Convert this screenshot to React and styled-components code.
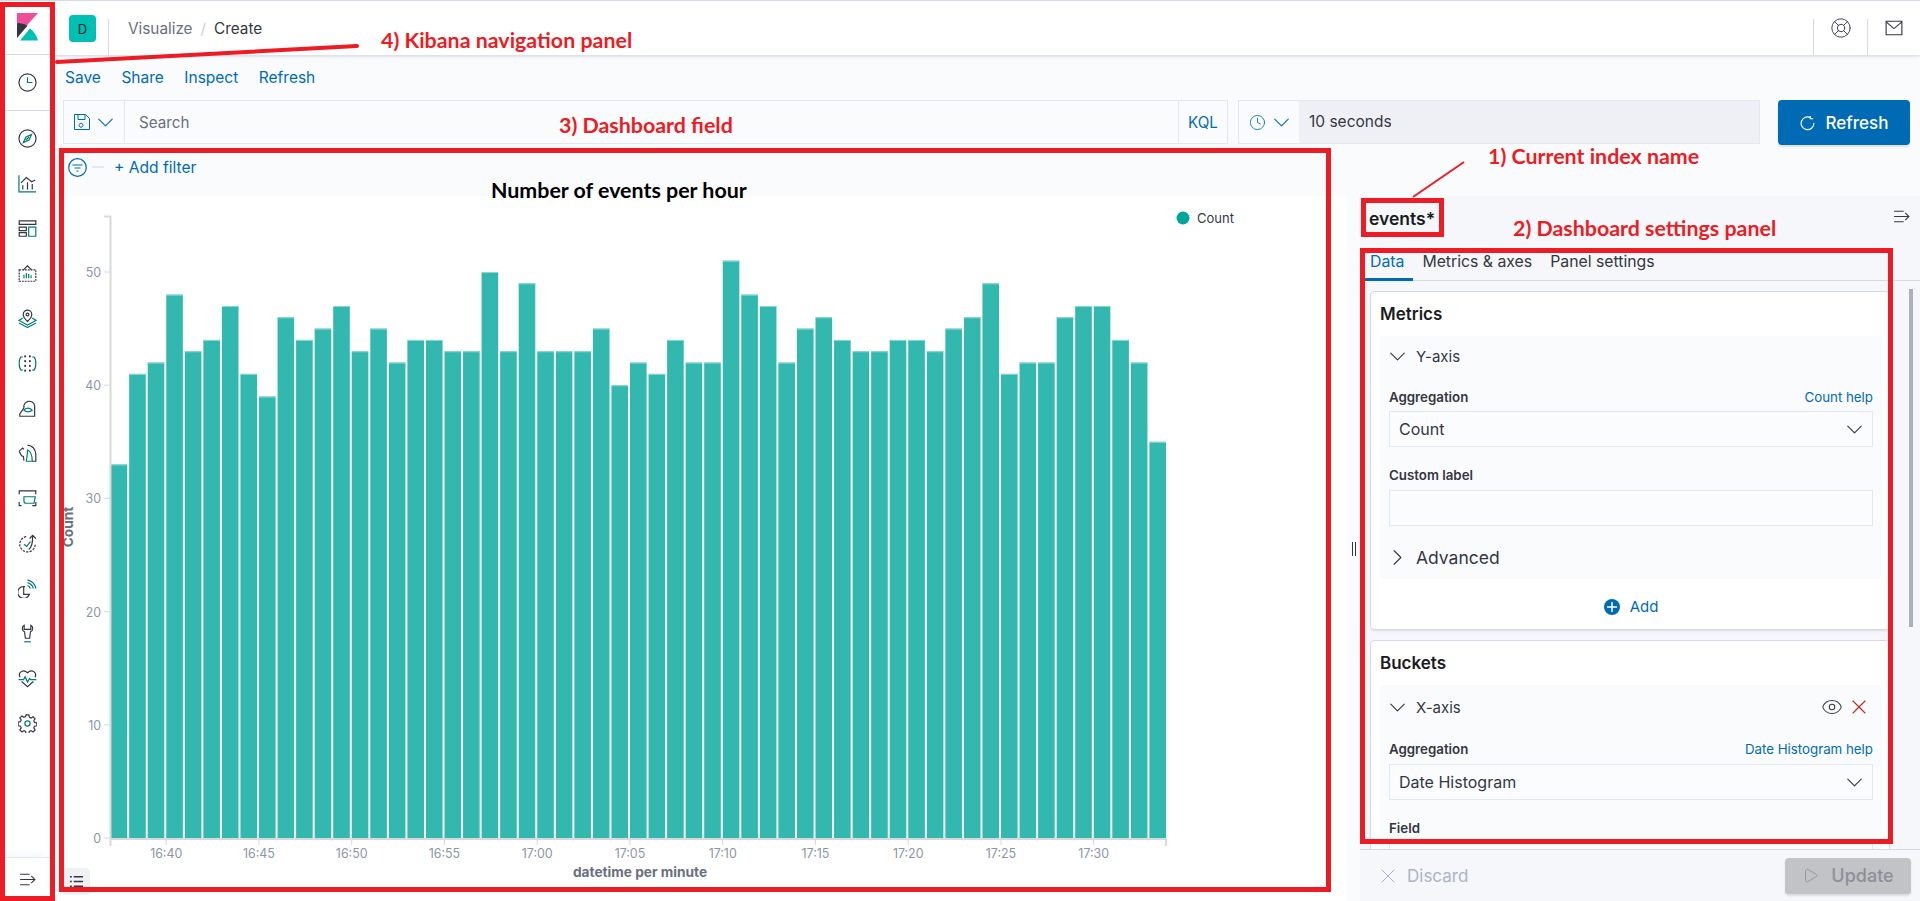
import React from 'react';
import styled, { createGlobalStyle } from 'styled-components';
import { ChevronDown, ChevronRight, Eye, X, Play, Clock, LifeBuoy } from 'lucide-react';

const GlobalStyle = createGlobalStyle`
    html, body { margin: 0; padding: 0; background: #fff; }
    body { font-family: "Inter", "Liberation Sans", sans-serif; color: #343741; overflow: hidden; }
    * { box-sizing: border-box; }
`;

const Page = styled.div`
    position: relative;
    display: flex;
    width: 1920px;
    height: 901px;
    overflow: hidden;
    border-top: 1px solid #d3dae6;
`;

/* left nav */
const Nav = styled.nav`
    width: 50px;
    flex-shrink: 0;
    display: flex;
    flex-direction: column;
    background: #fff;
`;
const NavTop = styled.div`
    height: ${p => p.$h}px;
    display: flex;
    align-items: center;
    justify-content: center;
    border-bottom: 1px solid #d3dae6;
    flex-shrink: 0;
`;
const NavList = styled.div`
    flex: 1;
    padding-top: 5px;
    display: flex;
    flex-direction: column;
`;
const NavItem = styled.div`
    height: 45px;
    display: flex;
    align-items: center;
    justify-content: center;
    padding-left: 4px;
`;
const NavBottom = styled.div`
    height: 44px;
    display: flex;
    align-items: center;
    justify-content: center;
    padding-left: 4px;
    border-top: 1px solid #e6e9f0;
    box-shadow: 0 -6px 8px -4px rgba(152,162,179,.12);
`;
const Icon = styled.svg`
    width: ${p => p.$s || 19}px;
    height: ${p => p.$s || 19}px;
    fill: none;
    stroke-width: 1;
    flex-shrink: 0;
`;
const D = styled.path`stroke: #343741;`;
const T = styled.path`stroke: #017d73;`;
const Dots = styled.path`
    stroke: #343741;
    stroke-width: 1.7;
    stroke-linecap: round;
`;

const Main = styled.div`
    flex: 1;
    min-width: 0;
    display: flex;
    flex-direction: column;
    background: #fafbfd;
`;

/* top header */
const Header = styled.header`
    height: 54px;
    flex-shrink: 0;
    display: flex;
    align-items: flex-start;
    background: #fff;
    box-shadow: 0 1px 3px rgba(152,162,179,.45);
    position: relative;
`;
const Avatar = styled.div`
    width: 27px;
    height: 27px;
    margin: 14px 12px 0 19px;
    border-radius: 4px;
    background: #00bfb3;
    display: flex;
    align-items: center;
    justify-content: center;
    font-size: 13px;
    color: #1a1c21;
`;
const Crumbs = styled.div`
    height: 36px;
    margin-top: 18px;
    padding: 0 0 18px 19px;
    border-left: 1px solid #d3dae6;
    display: flex;
    align-items: center;
    flex: 1;
    font-size: 15.3px;
    color: #69707d;
`;
const CrumbSep = styled.span`
    margin: 0 8px;
    color: #c9ced8;
`;
const CrumbNow = styled.span`
    color: #343741;
`;
const HeaderBtn = styled.div`
    width: ${p => p.$w}px;
    height: 36px;
    margin-top: 18px;
    border-left: 1px solid #d3dae6;
    display: flex;
    justify-content: center;
    color: #343741;
`;
const Buoy = styled(LifeBuoy)`
    margin-top: -2px;
`;

/* app menu */
const Menu = styled.div`
    height: 45px;
    flex-shrink: 0;
    display: flex;
    align-items: center;
    gap: 20.5px;
    padding: 0 0 0 15px;
`;
const MenuLink = styled.span`
    font-size: 15.5px;
    color: #006bb4;
`;

/* query bar */
const QueryRow = styled.div`
    height: 45px;
    flex-shrink: 0;
    display: flex;
    padding: 0 10px 0 13px;
`;
const QueryBox = styled.div`
    flex: 1;
    height: 44px;
    display: flex;
    align-items: center;
    border: 1px solid #e3e7ef;
    background: #fafbfd;
`;
const QueryPrepend = styled.div`
    width: ${p => p.$w}px;
    height: 100%;
    display: flex;
    align-items: center;
    justify-content: center;
    gap: 7px;
    color: #006bb4;
    flex-shrink: 0;
    border-right: ${p => (p.$noLine ? 'none' : '1px solid #e3e7ef')};
`;
const SearchText = styled.div`
    flex: 1;
    padding-left: 14px;
    font-size: 15.2px;
    color: #69707d;
`;
const Kql = styled.div`
    width: 49px;
    height: 100%;
    display: flex;
    align-items: center;
    justify-content: center;
    font-size: 15.2px;
    color: #006bb4;
    border-left: 1px solid #e3e7ef;
`;
const TimeBox = styled.div`
    width: 522px;
    height: 44px;
    margin-left: 10px;
    display: flex;
    align-items: center;
    border: 1px solid #e3e7ef;
    background: #fafbfd;
`;
const TimeValue = styled.div`
    flex: 1;
    height: 100%;
    display: flex;
    align-items: center;
    padding-left: 10px;
    padding-bottom: 2px;
    background: #eef0f5;
    font-size: 15.5px;
    color: #343741;
`;
const RefreshBtn = styled.div`
    width: 132px;
    height: 45px;
    margin-left: 18px;
    border-radius: 4px;
    background: #006bb4;
    color: #fff;
    display: flex;
    align-items: center;
    justify-content: center;
    gap: 11px;
    font-size: 17px;
    font-weight: 500;
    box-shadow: 0 2px 2px rgba(152,162,179,.3);
`;

/* work area */
const Work = styled.div`
    flex: 1;
    min-height: 0;
    display: flex;
`;
const ChartColumn = styled.div`
    width: 1297px;
    flex-shrink: 0;
    padding-top: 5px;
    display: flex;
    flex-direction: column;
`;
const FilterBar = styled.div`
    height: 46px;
    flex-shrink: 0;
    display: flex;
    align-items: flex-start;
    padding: 8px 0 0 18px;
`;
const FilterDash = styled.span`
    width: 12px;
    height: 2px;
    margin: 8px 10px 0 5px;
    background: #e3e7ef;
`;
const AddFilter = styled.span`
    font-size: 15.6px;
    line-height: 20px;
    color: #006bb4;
`;
const ChartPanel = styled.div`
    flex: 1;
    position: relative;
    background: #fff;
`;
const ChartSvg = styled.svg`
    display: block;
    width: 1297px;
    height: 705px;
`;
const AxisLabel = styled.text`
    font-family: "Inter", sans-serif;
    font-size: 12.4px;
    fill: #8c95a6;
    text-anchor: ${p => p.$anchor || 'middle'};
`;
const AxisTitle = styled.text`
    font-family: "Inter", sans-serif;
    font-size: 13.7px;
    font-weight: 700;
    fill: #69707d;
    text-anchor: middle;
`;
const LegendLabel = styled.text`
    font-family: "Inter", sans-serif;
    font-size: 13px;
    fill: #343741;
`;
const ListToggle = styled.div`
    position: absolute;
    left: 13px;
    top: 672px;
    width: 27px;
    height: 27px;
    border-radius: 4px;
    background: #f0f1f4;
    color: #343741;
    display: flex;
    align-items: center;
    justify-content: center;
`;

/* options panel */
const Side = styled.aside`
    flex: 1;
    min-width: 0;
    margin-top: 51px;
    display: flex;
    background: #f5f7fa;
`;
const Resizer = styled.div`
    width: 13px;
    flex-shrink: 0;
    display: flex;
    align-items: center;
    justify-content: center;
    gap: 2px;
    background: #fafbfd;
`;
const ResizerBar = styled.span`
    width: 1px;
    height: 14px;
    background: #343741;
`;
const SideBody = styled.div`
    flex: 1;
    min-width: 0;
    display: flex;
    flex-direction: column;
    position: relative;
`;
const SideHead = styled.div`
    height: 52px;
    flex-shrink: 0;
    display: flex;
    justify-content: space-between;
    padding: 12px 10px 0 9px;
`;
const IndexName = styled.div`
    font-size: 17.5px;
    font-weight: 600;
    line-height: 22px;
    color: #1a1c21;
`;
const Tabs = styled.div`
    height: 33px;
    flex-shrink: 0;
    display: flex;
    padding-left: 1px;
    border-bottom: 1px solid #d3dae6;
`;
const Tab = styled.div`
    height: 33px;
    padding: 4px 9px 0;
    font-size: 15.8px;
    line-height: 20px;
    color: ${p => (p.$active ? '#006bb4' : '#343741')};
    border-bottom: ${p => (p.$active ? '3px solid #006bb4' : 'none')};
`;
const Scroll = styled.div`
    flex: 1;
    min-height: 0;
    overflow: hidden;
    padding: 10px 30px 0 10px;
`;
const Scrollbar = styled.div`
    position: absolute;
    right: 7px;
    top: 93px;
    width: 4px;
    height: 338px;
    background: #abb0ba;
`;
const Card = styled.section`
    margin-bottom: 10px;
    padding: 11px 7px 0 9px;
    background: #fff;
    border: 1px solid #d3dae6;
    border-radius: 4px;
    box-shadow: 0 2px 2px -1px rgba(152,162,179,.3);
`;
const CardTitle = styled.h3`
    margin: 0 0 11px;
    height: 22px;
    font-size: 17px;
    font-weight: 600;
    line-height: 22px;
    color: #1a1c21;
`;
const Agg = styled.div`
    padding: 0 9px 2px 9px;
    background: #fafbfd;
    border-radius: 4px;
`;
const AggHead = styled.div`
    height: ${p => p.$h}px;
    margin-top: ${p => p.$top || 0}px;
    display: flex;
    align-items: center;
    color: #343741;
`;
const AggName = styled.span`
    margin-left: 10px;
    font-size: 15px;
    flex: 1;
`;
const Advanced = styled.span`
    margin-left: 10px;
    font-size: 17.5px;
    color: #343741;
`;
const FieldHead = styled.div`
    height: 18px;
    margin-top: ${p => p.$top}px;
    margin-bottom: ${p => p.$gap || 5}px;
    display: flex;
    justify-content: space-between;
    align-items: center;
`;
const FieldLabel = styled.label`
    font-size: 13.3px;
    font-weight: 600;
    color: #343741;
`;
const HelpLink = styled.span`
    font-size: 13.3px;
    color: #006bb4;
`;
const Select = styled.div`
    height: 36px;
    display: flex;
    align-items: center;
    justify-content: space-between;
    padding: 0 10px 0 9px;
    font-size: 16px;
    color: #343741;
    background: #fbfcfd;
    border: 1px solid #e3e7ef;
`;
const AddRow = styled.div`
    height: 50px;
    padding-top: 5px;
    display: flex;
    align-items: center;
    justify-content: center;
    gap: 10px;
    font-size: 15px;
    color: #006bb4;
`;
const AddDot = styled.span`
    width: 16px;
    height: 16px;
    border-radius: 50%;
    background: #006bb4;
    color: #fff;
    display: flex;
    align-items: center;
    justify-content: center;
`;
const Actions = styled.div`
    height: 52px;
    flex-shrink: 0;
    display: flex;
    align-items: center;
    justify-content: space-between;
    padding: 0 9px 0 16px;
    background: #f5f7fa;
    border-top: 1px solid #d3dae6;
`;
const Discard = styled.div`
    display: flex;
    align-items: center;
    gap: 7px;
    font-size: 17px;
    color: #abb4c4;
`;
const UpdateBtn = styled.div`
    width: 126px;
    height: 36px;
    border-radius: 4px;
    background: #c2c3c6;
    color: #8c9099;
    display: flex;
    align-items: center;
    justify-content: center;
    gap: 12px;
    font-size: 18px;
    font-weight: 500;
    box-shadow: 0 2px 2px rgba(152,162,179,.3);
`;

/* red notes drawn over the screenshot */
const Frame = styled.div`
    position: absolute;
    left: ${p => p.$x}px;
    top: ${p => p.$y}px;
    width: ${p => p.$w}px;
    height: ${p => p.$h}px;
    border: ${p => p.$b || 5}px solid #ed1c24;
    pointer-events: none;
`;
const Note = styled.div`
    position: absolute;
    left: ${p => p.$x}px;
    top: ${p => p.$y}px;
    font-family: "Lato", "Liberation Sans", sans-serif;
    font-weight: 700;
    font-size: 21.4px;
    line-height: 24px;
    white-space: nowrap;
    color: ${p => p.$color || '#ed1c24'};
`;
const Scribble = styled.svg`
    position: absolute;
    left: 0;
    top: 0;
    width: 1920px;
    height: 901px;
    pointer-events: none;
`;

/* lucide chevrons drawn big and thin, the negative margin keeps their layout box small */
const Chevron = styled(ChevronDown).attrs({ size: 27, strokeWidth: 1 })`
    flex-shrink: 0;
    margin: 0 -5px;
`;
const SideChevron = styled(ChevronRight).attrs({ size: 27, strokeWidth: 1 })`
    flex-shrink: 0;
    margin: 0 -5px;
`;
const SelectChevron = styled(ChevronDown).attrs({ size: 27, strokeWidth: 1 })`
    flex-shrink: 0;
    margin-right: -6px;
`;
const RemoveIcon = styled(X)`
    margin: 0 2px 0 4px;
`;

const counts = [33, 41, 42, 48, 43, 44, 47, 41, 39, 46, 44, 45, 47, 43, 45, 42, 44, 44, 43, 43, 50, 43, 49, 43, 43, 43, 45, 40, 42, 41, 44, 42, 42, 51, 48, 47, 42, 45, 46, 44, 43, 43, 44, 44, 43, 45, 46, 49, 41, 42, 42, 46, 47, 47, 44, 42, 35];
const xTicks = ['16:40', '16:45', '16:50', '16:55', '17:00', '17:05', '17:10', '17:15', '17:20', '17:25', '17:30'];
const yTicks = [0, 10, 20, 30, 40, 50];
const ZERO_Y = 838;
const UNIT = 11.32;

const navIcons = [
    <><D d="M8 .8a7.2 7.2 0 1 0 0 14.4A7.2 7.2 0 0 0 8 .8Z" /><T d="M8 3.5V8h4.2" /></>,
    <><D d="M8 .8a7.2 7.2 0 1 0 0 14.4A7.2 7.2 0 0 0 8 .8Z" /><T d="M11.5 4.5 9.3 9.3 4.5 11.5 6.7 6.7Z M6.7 9.3 9.3 6.7" /></>,
    <><T d="M.8 1v14h14.4" /><D d="M2.5 7.5 7 3l4.5 3.5 3-1.500M4 9.500V13M8 7v6M12 8.500V13" /></>,
    <><D d="M1 1.500h14v3H1ZM1 6.800h6v3H1ZM1 11.500h6v3H1Z" /><T d="M9 6.800h6v7.700H9Z" /></>,
    <><D strokeDasharray="1.6 .8" d="M1 5h14v9.500H1Z" /><D d="M4.500 5 8 1.500 11.500 5" /><T d="M5 12V9M7 12V7.500M9 12V8.500M11 12V9.500" /></>,
    <><D d="M8 1a3.600 3.600 0 0 0-3.600 3.600C4.400 7 8 10.500 8 10.500s3.600-3.500 3.600-5.900A3.600 3.600 0 0 0 8 1ZM8 3.400a1.200 1.200 0 1 0 0 2.400 1.200 1.200 0 0 0 0-2.400Z" /><T d="M4 7.500.8 9.600 8 13.500l7.200-3.900L12 7.500M.8 11.800 8 15.600l7.200-3.800" /></>,
    <><T d="M4 2.500H2.500C1.500 3.500 1 5 1 8s.5 4.500 1.500 5.500H4M12 2.500h1.500c1 1 1.500 2.500 1.500 5.500s-.5 4.500-1.500 5.500H12" /><Dots d="M6 2h.01M10 2h.01M6 6h.01M10 6h.01M6 10h.01M10 10h.01M6 14h.01M10 14h.01" /></>,
    <><D d="M5 7.500A4.500 4.500 0 0 1 14 5.500v9H1.500v-2L5 7.500Z" /><T d="M5 9.500C6.500 7 10 7 12 9.500 10 11 7 11 5 9.500Z" /></>,
    <><D d="M8 1c4 .5 6.600 3.600 7 7.500v6H12M1 6l3-2.500 1 1M1 6l2 4 1.500.5.5 3.500" /><T d="M8 5c2.500 1 4 3.500 4 9.500H7C7.500 11 8 8 8 5Z" /></>,
    <><D d="M3 1.500H1v3M1 1.500h14v3M1 11v3h2M12 14h3v-3" /><T d="M5 6.500h9.500l-1 5.500H7a2 2 0 0 1-2-2Z" /></>,
    <><D strokeDasharray="2 1" d="M14.500 9A6.500 6.500 0 1 1 7 2.200" /><T d="M5 8.500 7.200 10.500 10.500 6.500" /><D d="M9 13C12 11 12.500 7 12.300 1.500M9.800 3.800 12.300 1.200 15 3.800" /></>,
    <><D d="M6 6.500A5 5 0 1 0 9.500 13H4.800V6.500Z" /><T d="M8 5.500a5 5 0 0 1 2.500 2.500M8 3a7.500 7.500 0 0 1 5 5M8 .8a10 10 0 0 1 7.200 7.200" /></>,
    <><D d="M5.200 1C3 2 3 5.500 5.500 6.500L6.200 12h3.600l.7-5.500C13 5.500 13 2 10.800 1v3.500H5.200Z" /><T d="M5.200 15h5.600" /></>,
    <><D d="M1.800 7C-.5 3 4.500-.5 8 3.200 11.500-.5 16.500 3 14.200 7M3 10.500 8 15l5-4.500" /><T d="M.5 9h4.200l1.300-2.500 2 4.500 1.700-3 1 1h4.800" /></>,
    <><D d="M6.800.8h2.400l.4 2 1.400.6 1.700-1.100 1.700 1.700-1.100 1.700.6 1.400 2 .4v2.400l-2 .4-.6 1.400 1.100 1.700-1.700 1.700-1.700-1.100-1.400.6-.4 2H6.800l-.4-2-1.400-.6-1.700 1.100-1.700-1.700 1.100-1.700-.6-1.400-2-.4V6.800l2-.4.6-1.400-1.100-1.700 1.700-1.700 1.700 1.100 1.400-.6Z" /><T d="M8 5.800a2.200 2.200 0 1 0 0 4.400 2.200 2.200 0 0 0 0-4.400Z" /></>,
];

const CollapseIcon = () => (
    <Icon $s={17} viewBox="0 0 16 16">
        <D d="M1 3h9M1 8h14M1 13h9M11.500 4.500 15 8l-3.500 3.500" />
    </Icon>
);

const Chart = () => (
    <ChartSvg viewBox="50 196 1297 705">
        {counts.map((c, i) => {
            const x = 110.6 + i * 18.55;
            const y = ZERO_Y - c * UNIT;
            return (
                <g key={i}>
                    <rect x={x} y={y} width={16.6} height={ZERO_Y - y} fill="#33b8af" />
                    <rect x={x} y={y} width={16.6} height={1} fill="#8fd8d2" />
                </g>
            );
        })}
        <path d="M110.500 216V839M104 216.500h7M110 839H1167M1166 839v7M110.500 839v7" stroke="#d9d9d9" strokeWidth="2" fill="none" />
        {yTicks.map(v => (
            <g key={v}>
                <path d={`M104 ${ZERO_Y - v * UNIT}h6`} stroke="#d9d9d9" strokeWidth="1" />
                <AxisLabel $anchor="end" x={101} y={ZERO_Y - v * UNIT + 5}>{v}</AxisLabel>
            </g>
        ))}
        {xTicks.map((t, i) => {
            const x = 166.2 + i * 92.75;
            return (
                <g key={t}>
                    <path d={`M${x} 839v6`} stroke="#d9d9d9" strokeWidth="1" />
                    <AxisLabel x={x} y={858}>{t}</AxisLabel>
                </g>
            );
        })}
        <AxisTitle x={640} y={877}>datetime per minute</AxisTitle>
        <AxisTitle transform="translate(73 527) rotate(-90)">Count</AxisTitle>
        <circle cx={1183} cy={218} r={6.5} fill="#00a69b" />
        <LegendLabel x={1197} y={222.5}>Count</LegendLabel>
    </ChartSvg>
);

const App = () => (
    <Page>
        <GlobalStyle />
        <Nav>
            <NavTop $h={54}>
                <svg width="50" height="54" viewBox="0 0 50 54">
                    <path d="M17 12h21L17.400 35 17 22Z" fill="#f04e98" />
                    <path d="M17 22c4 0 7.500 1 10.500 2.800L17 37Z" fill="#343741" />
                    <path d="M20 39.500h18c-1-4.500-4-9-8-12Z" fill="#00bfb3" />
                </svg>
            </NavTop>
            <NavTop $h={56}>
                <NavItem><Icon viewBox="0 0 16 16">{navIcons[0]}</Icon></NavItem>
            </NavTop>
            <NavList>
                {navIcons.slice(1).map((icon, i) => (
                    <NavItem key={i}><Icon viewBox="0 0 16 16">{icon}</Icon></NavItem>
                ))}
            </NavList>
            <NavBottom><CollapseIcon /></NavBottom>
        </Nav>
        <Main>
            <Header>
                <Avatar>D</Avatar>
                <Crumbs>Visualize<CrumbSep>/</CrumbSep><CrumbNow>Create</CrumbNow></Crumbs>
                <HeaderBtn $w={54}><Buoy size={22} strokeWidth={1} /></HeaderBtn>
                <HeaderBtn $w={53}>
                    <Icon $s={18} viewBox="0 0 16 16"><D d="M1 2h14v12H1ZM1 2.500l7 6 7-6" /></Icon>
                </HeaderBtn>
            </Header>
            <Menu>
                <MenuLink>Save</MenuLink>
                <MenuLink>Share</MenuLink>
                <MenuLink>Inspect</MenuLink>
                <MenuLink>Refresh</MenuLink>
            </Menu>
            <QueryRow>
                <QueryBox>
                    <QueryPrepend $w={61}>
                        <svg width="16" height="16" viewBox="0 0 16 16" fill="none" stroke="currentColor">
                            <path d="M.5.5h11l4 4v11H.5ZM4 .5v5h7v-5M8 9.500a2 2 0 1 0 0 3.500 2 2 0 0 0 0-3.500Z" />
                        </svg>
                        <Chevron />
                    </QueryPrepend>
                    <SearchText>Search</SearchText>
                    <Kql>KQL</Kql>
                </QueryBox>
                <TimeBox>
                    <QueryPrepend $w={60} $noLine>
                        <Clock size={17} strokeWidth={1.2} />
                        <Chevron />
                    </QueryPrepend>
                    <TimeValue>10 seconds</TimeValue>
                </TimeBox>
                <RefreshBtn>
                    <svg width="15" height="16" viewBox="0 0 16 16" fill="none" stroke="#fff" strokeWidth="1.2">
                        <path d="M11 2.200A6.800 6.800 0 1 0 14.800 8M11 .5v3h3" />
                    </svg>
                    Refresh
                </RefreshBtn>
            </QueryRow>
            <Work>
                <ChartColumn>
                    <FilterBar>
                        <svg width="19" height="19" viewBox="0 0 19 19" fill="none" stroke="#006bb4" strokeWidth="1.2">
                            <circle cx="9.500" cy="9.500" r="8.800" />
                            <path d="M4.500 7h10M6.500 10h6M8.500 13h2" />
                        </svg>
                        <FilterDash />
                        <AddFilter>+ Add filter</AddFilter>
                    </FilterBar>
                    <ChartPanel>
                        <Chart />
                        <ListToggle>
                            <svg width="15" height="15" viewBox="0 0 16 16" fill="none" stroke="currentColor" strokeWidth="1.500">
                                <path d="M1 3h2M5 3h10M1 8h2M5 8h10M1 13h2M5 13h10" />
                            </svg>
                        </ListToggle>
                    </ChartPanel>
                </ChartColumn>
                <Side>
                    <Resizer><ResizerBar /><ResizerBar /></Resizer>
                    <SideBody>
                        <SideHead>
                            <IndexName>events*</IndexName>
                            <CollapseIcon />
                        </SideHead>
                        <Tabs>
                            <Tab $active>Data</Tab>
                            <Tab>Metrics &amp; axes</Tab>
                            <Tab>Panel settings</Tab>
                        </Tabs>
                        <Scroll>
                            <Card>
                                <CardTitle>Metrics</CardTitle>
                                <Agg>
                                    <AggHead $h={41}>
                                        <Chevron />
                                        <AggName>Y-axis</AggName>
                                    </AggHead>
                                    <FieldHead $top={11}>
                                        <FieldLabel>Aggregation</FieldLabel>
                                        <HelpLink>Count help</HelpLink>
                                    </FieldHead>
                                    <Select>Count<SelectChevron /></Select>
                                    <FieldHead $top={19} $gap={6}>
                                        <FieldLabel>Custom label</FieldLabel>
                                    </FieldHead>
                                    <Select />
                                    <AggHead $h={40} $top={11}>
                                        <SideChevron />
                                        <Advanced>Advanced</Advanced>
                                    </AggHead>
                                </Agg>
                                <AddRow>
                                    <AddDot>
                                        <svg width="10" height="10" viewBox="0 0 10 10" stroke="#fff" strokeWidth="1.500"><path d="M5 0v10M0 5h10" /></svg>
                                    </AddDot>
                                    Add
                                </AddRow>
                            </Card>
                            <Card>
                                <CardTitle>Buckets</CardTitle>
                                <Agg>
                                    <AggHead $h={44}>
                                        <Chevron />
                                        <AggName>X-axis</AggName>
                                        <Eye size={22} strokeWidth={1.1} />
                                        <RemoveIcon size={24} strokeWidth={1.1} color="#bd271e" />
                                    </AggHead>
                                    <FieldHead $top={11} $gap={6}>
                                        <FieldLabel>Aggregation</FieldLabel>
                                        <HelpLink>Date Histogram help</HelpLink>
                                    </FieldHead>
                                    <Select>Date Histogram<SelectChevron /></Select>
                                    <FieldHead $top={19}>
                                        <FieldLabel>Field</FieldLabel>
                                    </FieldHead>
                                    <Select />
                                </Agg>
                            </Card>
                        </Scroll>
                        <Scrollbar />
                        <Actions>
                            <Discard><X size={24} strokeWidth={1} />Discard</Discard>
                            <UpdateBtn><Play size={17} strokeWidth={1.2} />Update</UpdateBtn>
                        </Actions>
                    </SideBody>
                </Side>
            </Work>
        </Main>

        <Frame $x={0} $y={1} $w={55} $h={899} />
        <Frame $x={59} $y={147} $w={1272} $h={744} />
        <Frame $x={1361} $y={197} $w={83} $h={39} />
        <Frame $x={1360} $y={247} $w={533} $h={596} />
        <Scribble viewBox="0 0 1920 901">
            <path d="M57 61 357 45" stroke="#ed1c24" strokeWidth="4" strokeLinecap="round" />
            <path d="M1413 196 1464 161" stroke="#ed1c24" strokeWidth="2" />
        </Scribble>
        <Note $x={381} $y={27}>4) Kibana navigation panel</Note>
        <Note $x={559} $y={112}>3) Dashboard field</Note>
        <Note $x={1488} $y={143}>1) Current index name</Note>
        <Note $x={1513} $y={215}>2) Dashboard settings panel</Note>
        <Note $x={491} $y={177} $color="#000">Number of events per hour</Note>
    </Page>
);

export default App;
